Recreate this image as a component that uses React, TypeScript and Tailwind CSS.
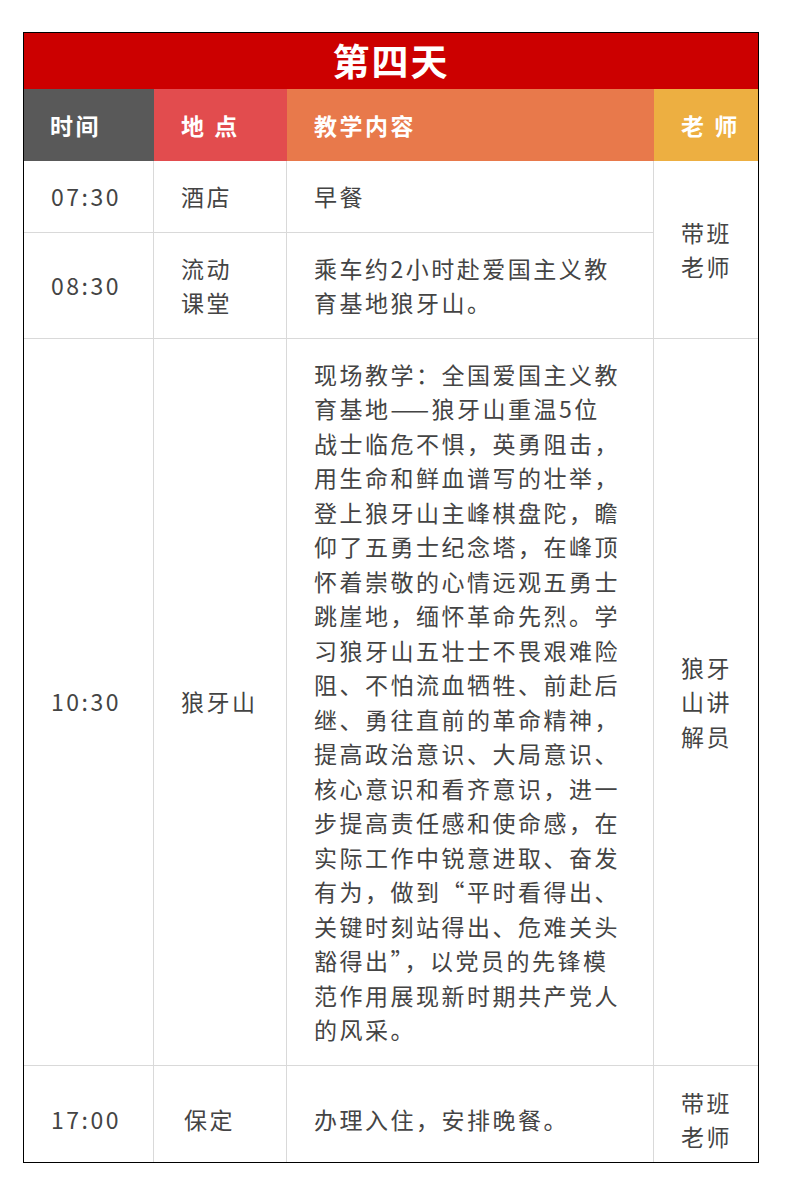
import React from 'react'

type Row = {
  time: string
  place: string[]
  content: string[]
  placePad?: string
  pad?: string
}

const rows: Row[] = [
  { time: '07:30', place: ['酒店'], content: ['早餐'] },
  { time: '08:30', place: ['流动', '课堂'], content: ['乘车约2小时赴爱国主义教', '育基地狼牙山。'] },
  {
    time: '10:30',
    place: ['狼牙山'],
    content: [
      '现场教学：全国爱国主义教',
      '育基地——狼牙山重温5位',
      '战士临危不惧，英勇阻击，',
      '用生命和鲜血谱写的壮举，',
      '登上狼牙山主峰棋盘陀，瞻',
      '仰了五勇士纪念塔，在峰顶',
      '怀着崇敬的心情远观五勇士',
      '跳崖地，缅怀革命先烈。学',
      '习狼牙山五壮士不畏艰难险',
      '阻、不怕流血牺牲、前赴后',
      '继、勇往直前的革命精神，',
      '提高政治意识、大局意识、',
      '核心意识和看齐意识，进一',
      '步提高责任感和使命感，在',
      '实际工作中锐意进取、奋发',
      '有为，做到“平时看得出、',
      '关键时刻站得出、危难关头',
      '豁得出”，以党员的先锋模',
      '范作用展现新时期共产党人',
      '的风采。',
    ],
  },
  { time: '17:00', place: ['保定'], content: ['办理入住，安排晚餐。'], placePad: 'pl-[30px]', pad: 'pt-[19px] pb-[8px]' },
]

const font = { fontFamily: '"Noto Sans CJK SC", "Noto Sans", sans-serif' }

function Lines({ items }: { items: string[] }) {
  return (
    <div>
      {items.map((t, i) => (
        <div key={i} className="whitespace-nowrap">{t}</div>
      ))}
    </div>
  )
}

export default function App() {
  const cell = 'flex items-center border-[#d9d9d9] pl-[27px]'
  return (
    <div className="bg-white min-h-[1186px] pt-[32px] pl-[23px]" style={font}>
      <div className="w-[736px] border border-black">
        <div className="h-[56px] bg-[#cc0000] flex items-center justify-center text-white text-[37px] font-bold tracking-[2px]">
          第四天
        </div>
        <div className="grid grid-cols-[130px_133px_367px_104px] text-[23px] leading-[1.5] tracking-[2.5px]">
          {/* header */}
          <div className="h-[72px] bg-[#595959] text-white font-bold flex items-center pl-[26px]">时间</div>
          <div className="h-[72px] bg-[#e24c4e] text-white font-bold flex items-center pl-[27px]">地 点</div>
          <div className="h-[72px] bg-[#e8794b] text-white font-bold flex items-center pl-[27px]">教学内容</div>
          <div className="h-[72px] bg-[#edaf41] text-white font-bold flex items-center pl-[27px]">老 师</div>

          {/* body */}
          {rows.map((r, i) => {
            const last = i === rows.length - 1
            const pad = r.pad ?? 'py-[18px]'
            const bb = last ? '' : 'border-b'
            return (
              <React.Fragment key={r.time}>
                <div className={`${cell} ${pad} ${bb} border-r text-[#444] col-start-1 pl-[25px]`} style={{ gridRowStart: i + 2 }}>
                  {r.time}
                </div>
                <div className={`${cell} ${pad} ${bb} border-r text-[#444] ${r.placePad ?? ''}`} style={{ gridRowStart: i + 2 }}>
                  <Lines items={r.place} />
                </div>
                <div className={`${cell} ${pad} ${bb} border-r text-[#444]`} style={{ gridRowStart: i + 2 }}>
                  <Lines items={r.content} />
                </div>
              </React.Fragment>
            )
          })}

          {/* teacher column */}
          <div className={`${cell} py-[18px] border-b text-[#444] col-start-4 row-start-2 row-span-2`}>
            <Lines items={['带班', '老师']} />
          </div>
          <div className={`${cell} py-[18px] border-b text-[#444] col-start-4 row-start-4`}>
            <Lines items={['狼牙', '山讲', '解员']} />
          </div>
          <div className={`${cell} pt-[19px] pb-[8px] text-[#444] col-start-4 row-start-5`}>
            <Lines items={['带班', '老师']} />
          </div>
        </div>
      </div>
    </div>
  )
}
